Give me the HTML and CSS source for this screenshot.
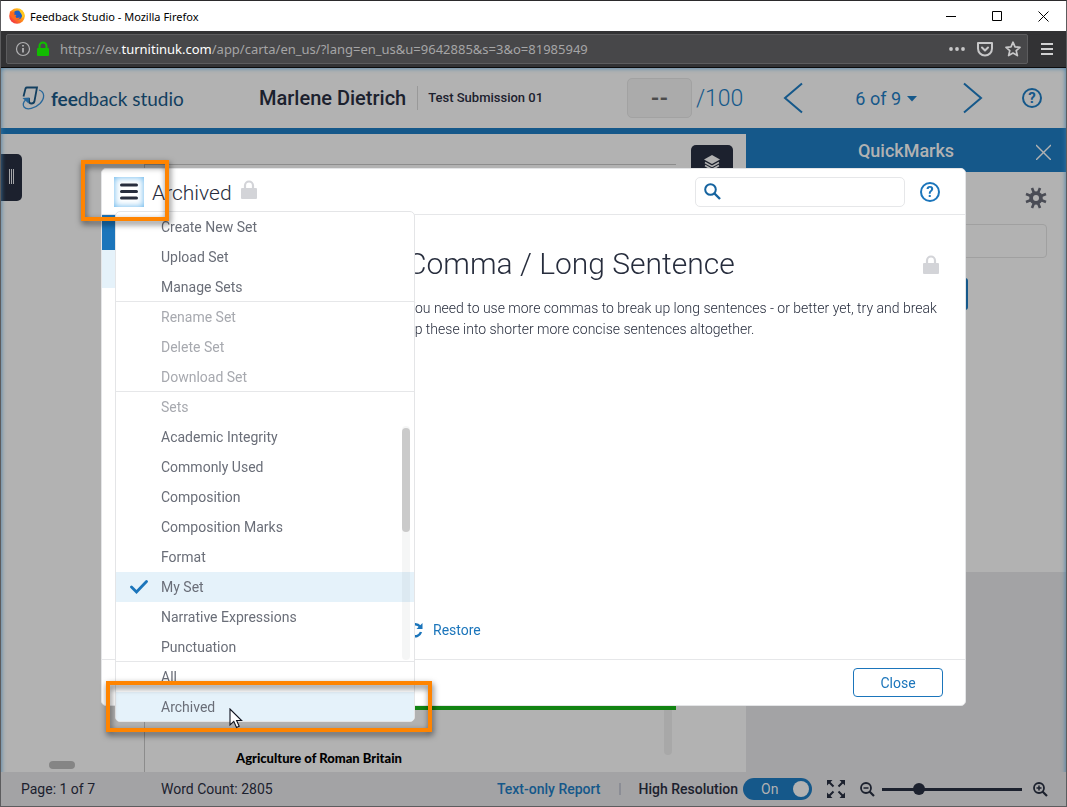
FILE: index.html
```
<!DOCTYPE html>
<html lang="en">
<head>
  <meta charset="UTF-8" />
  <title>Feedback Studio</title>
  <link rel="stylesheet" href="styles.css">
</head>
<body>
  <div class="titlebar">
    <svg class="firefox" viewBox="0 0 16 16" width="16" height="16">
      <defs>
        <linearGradient id="fox" x1="1" y1="0" x2="0" y2="1">
          <stop offset="0" stop-color="#ffe226" />
          <stop offset="0.45" stop-color="#ff9416" />
          <stop offset="1" stop-color="#f0144e" />
        </linearGradient>
      </defs>
      <circle cx="8" cy="8" r="7.8" fill="url(#fox)" />
      <circle cx="8.6" cy="7" r="4.6" fill="#1f5fc4" />
      <path d="M1 3l2 1.200 3 .2-1 2 2.500.600-1 1.500 1 1.500 3.500-.500c-1 2.500-4 3.300-6.500 1.500C1.500 9.500.5 6 1 3z" fill="#ff6a1c" />
      <path d="M10 .8c3 1.200 5.500 4.200 5.500 7.500l-2.500 2c.5-3-.5-4-1.500-5.500C10.500 3.500 9.800 2.300 10 .8z" fill="#ffc91f" />
    </svg>
    <span class="window-title">Feedback Studio - Mozilla Firefox</span>
    <button class="window-btn" aria-label="Minimize"><svg width="11" height="11"><path d="M0 5.500h10" stroke="#000" /></svg></button>
    <button class="window-btn" aria-label="Maximize"><svg width="11" height="11"><path d="M.5.500h9v9h-9z" stroke="#000" fill="none" /></svg></button>
    <button class="window-btn" aria-label="Close window"><svg width="11" height="11"><path d="M.5.500l10 10M10.500.500l-10 10" stroke="#000" /></svg></button>
  </div>

  <div class="toolbar">
    <div class="urlbar">
      <svg width="16" height="16" viewBox="0 0 16 16" fill="none" stroke="#b1b1b3"><circle cx="8" cy="8" r="6.500" stroke-width="1.200" /><path d="M8 7v4.500M8 4v1.500" stroke-width="1.800" /></svg>
      <svg width="14" height="16" viewBox="0 0 14 16"><path d="M3.500 7V5a3.300 3.300 0 0 1 7 0v2" fill="none" stroke="#12bc00" stroke-width="2" /><rect x="1" y="7" width="12" height="8" rx="1" fill="#12bc00" /></svg>
      <span class="url">https://ev.<b>turnitinuk.com</b>/app/carta/en_us/?lang=en_us&amp;u=9642885&amp;s=3&amp;o=81985949</span>
      <button class="bar-btn" aria-label="Page actions"><svg width="16" height="16" fill="#c8c8c9"><circle cx="2" cy="8" r="1.900" /><circle cx="8" cy="8" r="1.900" /><circle cx="14" cy="8" r="1.900" /></svg></button>
      <button class="bar-btn" aria-label="Save to Pocket"><svg width="16" height="16" fill="none" stroke="#c8c8c9" stroke-width="2" stroke-linecap="round" stroke-linejoin="round"><path d="M1 2h14v5.500a7 7 0 0 1-14 0z" /><path d="M5 6.500l3 3 3-3" /></svg></button>
      <button class="bar-btn" aria-label="Bookmark"><svg width="16" height="16" fill="none" stroke="#c8c8c9" stroke-width="1.700" stroke-linejoin="round"><path d="M8 1.200l2 4.600 5 .5-3.800 3.300 1.200 5L8 12l-4.400 2.600 1.200-5L1 6.300l5-.5z" /></svg></button>
    </div>
    <button class="bar-btn" aria-label="Open menu"><svg width="12" height="12"><path d="M0 1h12M0 6h12M0 11h12" stroke="#d0d0d1" stroke-width="2" /></svg></button>
  </div>

  <div class="app">
    <div class="workspace">
      <header class="header">
        <div class="logo">
          <svg width="24" height="26" viewBox="0 0 24 26" fill="none">
            <path d="M2.500 11.500L4.500 3.500Q5 2.500 6 2.500H16L13.500 16q-.5 2.500-3 2.500-2.500 0-2.500-2.500v-3" stroke="#123f60" stroke-width="1.800" />
            <path d="M18 5c6 2 6 8 1 13.500-5 5-13 7-16 3.500-1.500-2.500-.5-5 1.500-7" stroke="#28679a" stroke-width="1.300" />
            <path d="M1.500 13l7-.5-1 6z" fill="#28679a" />
          </svg>
          <span><b>fee</b>dback studio</span>
        </div>
        <h1 class="student">Marlene Dietrich</h1>
        <span class="submission">Test Submission 01</span>
        <div class="grading">
          <button class="score">--</button>
          <span class="total">/100</span>
        </div>
        <button class="plain previous" aria-label="Previous"><svg width="20" height="32" fill="none" stroke="#15588a" stroke-width="2"><path d="M19 1.500L2 16l17 14.500" /></svg></button>
        <button class="plain position">6 of 9 <svg width="10" height="8"><path d="M0 2h10L5 7.500z" fill="#15588a" /></svg></button>
        <button class="plain next" aria-label="Next"><svg width="20" height="32" fill="none" stroke="#15588a" stroke-width="2"><path d="M1 1.500L18 16 1 30.500" /></svg></button>
        <button class="help help-dim" aria-label="Help">?</button>
      </header>

      <main class="main">
        <section class="document">
          <button class="handle" aria-label="Show pages"><svg width="5" height="15"><path d="M.5 0v15M2.500 0v15M4.500 0v15" stroke="#a5a6a9" /></svg></button>
          <button class="layers" aria-label="Layers"><svg width="16" height="16" viewBox="0 0 16 16"><path d="M8 1l8 4.500-8 4.500-8-4.500z" fill="#b2b2b2" /><path d="M1 8.500l7 4 7-4M1 11.500l7 4 7-4" fill="none" stroke="#b2b2b2" stroke-width="1.500" /></svg></button>
          <div class="page">
            <div class="page-text">
              <h2>Agriculture of Roman Britain</h2>
              <span class="page-track"></span>
            </div>
          </div>
          <span class="h-thumb"></span>
        </section>

        <aside class="quickmarks">
          <div class="panel-header">
            <h2>QuickMarks</h2>
            <button class="plain" aria-label="Close QuickMarks"><svg width="15" height="19"><path d="M0 4l15 15M15 4L0 19" stroke="#b2b2b2" stroke-width="1.400" /></svg></button>
          </div>
          <div class="panel-body">
            <button class="plain gear" aria-label="Settings"><svg width="22" height="22" viewBox="-11 -11 22 22"><path d="M-4-10L4 10M4-10L-4 10M-10-4L10 4M-10 4L10-4" stroke="#4a4c55" stroke-width="2.600" /><circle r="6.800" fill="#4a4c55" /><circle r="3" fill="#b2b2b2" /></svg></button>
            <input class="panel-input" type="text" aria-label="QuickMark set">
            <button class="panel-action" aria-label="Add QuickMark"></button>
          </div>
        </aside>
      </main>
    </div>

    <footer class="footer">
      <span class="page-count">Page: 1 of 7</span>
      <span>Word Count: 2805</span>
      <a class="report" href="#">Text-only Report</a>
      <span class="divider"></span>
      <label class="resolution" for="resolution">High Resolution</label>
      <span class="toggle"><input type="checkbox" id="resolution" checked><span class="toggle-text">On</span></span>
      <button class="plain fullscreen" aria-label="Full screen"><svg width="20" height="20" viewBox="0 0 20 20"><path d="M2 2l5.500 5.500M18 2l-5.500 5.500M2 18l5.500-5.500M18 18l-5.500-5.500" stroke="#1c212e" stroke-width="2" /><path d="M1 1h5.500L1 6.500zM19 1v5.500L13.500 1zM1 19v-5.500L6.500 19zM19 19h-5.500l5.500-5.500z" fill="#1c212e" /></svg></button>
      <button class="plain" aria-label="Zoom out"><svg width="15" height="15" fill="none" stroke="#1c212e" stroke-width="1.800"><circle cx="6" cy="6" r="5" /><path d="M3.500 6h5" stroke-width="1.500" /><path d="M9.500 9.500l4.500 4.500" stroke-width="2.200" /></svg></button>
      <input class="zoom" type="range" min="0" max="100" value="24" aria-label="Zoom">
      <button class="plain" aria-label="Zoom in"><svg width="15" height="15" fill="none" stroke="#1c212e" stroke-width="1.800"><circle cx="6" cy="6" r="5" /><path d="M3.500 6h5M6 3.500v5" stroke-width="1.500" /><path d="M9.500 9.500l4.500 4.500" stroke-width="2.200" /></svg></button>
    </footer>
  </div>

  <div class="overlay">
    <div class="modal" role="dialog" aria-label="QuickMark manager">
      <div class="modal-header">
        <button class="hamburger" aria-label="Sets menu"><svg width="18" height="17"><path d="M1.500 2h15M1.500 8.500h15M1.500 15h15" stroke="#272d3d" stroke-width="3" stroke-linecap="round" /></svg></button>
        <h2>Archived</h2>
        <svg class="lock" width="16" height="19" viewBox="0 0 16 19"><path d="M4 9V5.500a4 4 0 0 1 8 0V9" fill="none" stroke="#d3d4d8" stroke-width="2.200" /><rect y="8" width="16" height="11" rx="1" fill="#d3d4d8" /></svg>
        <div class="search">
          <svg width="17" height="17" fill="none" stroke="#15639f"><circle cx="6.500" cy="6.500" r="5.300" stroke-width="2" /><path d="M10.500 10.500l5.500 5.500" stroke-width="2.400" /></svg>
          <input type="text" aria-label="Search QuickMarks">
        </div>
        <button class="help" aria-label="Help with QuickMarks">?</button>
      </div>
      <div class="modal-body">
        <div class="mark-list">
          <div class="mark-set"></div>
          <div class="mark-selected"></div>
        </div>
        <article class="mark">
          <div class="mark-title">
            <h3>Comma / Long Sentence</h3>
            <svg width="16" height="19" viewBox="0 0 16 19"><path d="M4 9V5.500a4 4 0 0 1 8 0V9" fill="none" stroke="#d3d4d8" stroke-width="2.200" /><rect y="8" width="16" height="11" rx="1" fill="#d3d4d8" /></svg>
          </div>
          <p>You need to use more commas to break up long sentences - or better yet, try and break up these into shorter more concise sentences altogether.</p>
          <button class="plain restore"><svg width="16" height="16" viewBox="0 0 16 16"><path d="M13 4.500A6 6 0 1 0 14 10" fill="none" stroke="#1b75bb" stroke-width="2.400" /><path d="M15.500 1v6h-6z" fill="#1b75bb" /></svg>Restore</button>
        </article>
      </div>
      <div class="modal-footer">
        <button class="close">Close</button>
      </div>

      <div class="menu" role="menu">
        <div class="menu-group">
          <button role="menuitem">Create New Set</button>
          <button role="menuitem">Upload Set</button>
          <button role="menuitem">Manage Sets</button>
        </div>
        <div class="menu-group">
          <button role="menuitem" disabled>Rename Set</button>
          <button role="menuitem" disabled>Delete Set</button>
          <button role="menuitem" disabled>Download Set</button>
        </div>
        <div class="menu-group">
          <span class="menu-label">Sets</span>
          <button role="menuitem">Academic Integrity</button>
          <button role="menuitem">Commonly Used</button>
          <button role="menuitem">Composition</button>
          <button role="menuitem">Composition Marks</button>
          <button role="menuitem">Format</button>
          <button class="active" role="menuitem"><svg width="18" height="14"><path d="M1.500 7l5 5L16.500 1.500" fill="none" stroke="#1b75bb" stroke-width="2.800" stroke-linecap="round" /></svg>My Set</button>
          <button role="menuitem">Narrative Expressions</button>
          <button role="menuitem">Punctuation</button>
          <div class="menu-scroll"><div class="menu-thumb"></div></div>
        </div>
        <div class="menu-group">
          <button role="menuitem">All</button>
          <button class="active" role="menuitem">Archived</button>
        </div>
      </div>

      <div class="callout callout-button"></div>
      <div class="callout callout-item"></div>
      <svg class="cursor" width="14" height="21" viewBox="0 0 14 21"><path d="M1 1v16l3.800-3.600L7.500 19.500l2.700-1.200-2.600-5.800h5z" fill="#fff" stroke="#10131f" stroke-width="1.100" /></svg>
    </div>
  </div>
</body>
</html>
```

FILE: styles.css
```
* {
  box-sizing: border-box;
}

body {
  margin: 0;
  height: 100vh;
  display: flex;
  flex-direction: column;
  border: 1px solid #5c5c5e;
  border-top-color: #2b2a2c;
  font-family: Roboto, sans-serif;
  font-size: 14px;
  color: #1c212e;
  overflow: hidden;
}

h1, h2, h3, p {
  margin: 0;
}

button {
  font: inherit;
  cursor: pointer;
}

svg {
  flex: none;
}

.plain, .bar-btn, .window-btn {
  display: flex;
  align-items: center;
  padding: 0;
  border: none;
  background: none;
}

/* Browser window */
.titlebar {
  display: flex;
  align-items: center;
  height: 30px;
  padding-left: 8px;
  background: #fff;
  color: #000;
}

.window-title {
  flex: 1;
  margin-left: 5px;
  font: 11px "Noto Sans", sans-serif;
}

.window-btn {
  width: 46px;
  height: 30px;
  justify-content: center;
}

.toolbar {
  display: flex;
  align-items: center;
  gap: 13px;
  height: 37px;
  padding: 0 13px 0 5px;
  background: #323234;
  border-bottom: 1px solid #0c0c0d;
}

.urlbar {
  flex: 1;
  display: flex;
  align-items: center;
  height: 30px;
  padding: 0 6px 0 8px;
  gap: 12px;
  background: #474749;
  border: 1px solid #5c5c5e;
  border-radius: 2px;
}

.urlbar svg + svg {
  margin: 0 -2px 0 -7px;
}

.url {
  flex: 1;
  font: 13px "Noto Sans", sans-serif;
  color: #a5a5a6;
}

.url b {
  font-weight: 400;
  color: #fff;
}

/* Header */
.app {
  flex: 1;
  display: flex;
  flex-direction: column;
  min-height: 0;
  background: #b2b2b2;
}

.workspace {
  position: relative;
  flex: 1;
  display: flex;
  flex-direction: column;
  min-height: 0;
}

.workspace::after {
  content: "";
  position: absolute;
  inset: 0 0 -10px;
  box-shadow: inset 0 0 5px #3c7aa6;
  clip-path: inset(0 0 10px);
  pointer-events: none;
}

.header {
  display: flex;
  align-items: center;
  height: 60px;
  padding: 0 24px 0 20px;
  color: #15588a;
}

.logo {
  display: flex;
  align-items: center;
  gap: 6px;
  width: 238px;
  color: #123f60;
  font: 19px Lato, sans-serif;
}

.student {
  padding-right: 11px;
  border-right: 1px solid #999;
  font-size: 20px;
  font-weight: 500;
  color: #1c212e;
}

.submission {
  margin-left: 10px;
  font-size: 13px;
  font-weight: 500;
  line-height: 20px;
  color: #1c212e;
}

.grading {
  display: flex;
  align-items: center;
  gap: 4px;
  margin-left: auto;
}

.score {
  width: 65px;
  height: 40px;
  background: #ababab;
  border: 1px solid #a2a2a2;
  border-radius: 5px;
  color: #4b4b4b;
  font-size: 22px;
  font-weight: 700;
}

.total {
  font-size: 23px;
  font-weight: 300;
}

.previous {
  margin-left: 40px;
}

.position {
  gap: 6px;
  margin: 0 46px 0 52px;
  color: #15588a;
  font-size: 18px;
}

.help {
  width: 20px;
  height: 20px;
  padding: 0;
  background: none;
  border: 2px solid #1b75bb;
  border-radius: 50%;
  color: #1b75bb;
  font-size: 15px;
  font-weight: 700;
  line-height: 16px;
}

.help-dim {
  margin-left: 39px;
  border-color: #15588a;
  color: #15588a;
}

/* Document and side panel */
.main {
  flex: 1;
  display: flex;
  min-height: 0;
  border-top: 6px solid #15588a;
}

.document {
  position: relative;
  flex: 1;
  display: flex;
  padding: 30px 70px 0 143px;
}

.page {
  flex: 1;
  display: flex;
  flex-direction: column;
  justify-content: flex-end;
  border-top: 1px solid #8c8c8c;
  border-left: 1px solid #8c8c8c;
}

.page-text {
  position: relative;
  height: 66px;
  padding: 40px 91px 0;
  border-top: 4px solid #128312;
}

.page-text h2 {
  color: #000;
  font: 900 13px/16px Lato, sans-serif;
}

.page-track {
  position: absolute;
  top: 0;
  right: 4px;
  width: 8px;
  height: 45px;
  background: #a8a8a8;
  border-radius: 0 0 4px 4px;
}

.h-thumb {
  position: absolute;
  left: 48px;
  bottom: 3px;
  width: 26px;
  height: 8px;
  background: #858585;
  border-radius: 4px;
}

.handle {
  position: absolute;
  left: 0;
  top: 20px;
  width: 21px;
  height: 47px;
  padding: 0;
  background: #1c212e;
  border: none;
  border-radius: 0 5px 5px 0;
}

.layers {
  position: absolute;
  right: 13px;
  top: 11px;
  width: 42px;
  height: 36px;
  padding: 0;
  background: #1c212e;
  border: none;
  border-radius: 5px;
}

.quickmarks {
  width: 320px;
  display: flex;
  flex-direction: column;
  margin-top: -6px;
  background: #a3a3a5;
}

.panel-header {
  display: flex;
  align-items: center;
  height: 44px;
  padding: 0 15px;
  background: #15588a;
  color: #b2b2b2;
}

.panel-header h2 {
  flex: 1;
  padding-left: 15px;
  text-align: center;
  font-size: 18px;
  font-weight: 500;
}

.panel-body {
  height: 400px;
  display: flex;
  flex-direction: column;
  align-items: flex-end;
  padding: 15px 19px;
  background: #b2b2b2;
}

.panel-input {
  width: 100%;
  height: 34px;
  margin-top: 15px;
  background: none;
  border: 1px solid #a0a0a0;
  border-radius: 4px;
}

.panel-action {
  width: 200px;
  height: 32px;
  margin: 20px 79px 0 0;
  background: #15588a;
  border: none;
  border-radius: 3px;
}

/* Footer */
.footer {
  display: flex;
  align-items: center;
  height: 34px;
  padding: 0 18px 0 20px;
  background: #a3a3a5;
}

.page-count {
  width: 140px;
}

.report {
  margin-left: auto;
  color: #15588a;
  font-weight: 500;
  text-decoration: none;
}

.divider {
  width: 2px;
  height: 12px;
  margin: 0 18px;
  background: #8b8d95;
}

.resolution {
  font-weight: 500;
}

.toggle {
  position: relative;
  display: flex;
  margin-left: 5px;
}

.toggle input {
  appearance: none;
  display: flex;
  align-items: center;
  justify-content: flex-end;
  width: 69px;
  height: 22px;
  margin: 0;
  padding: 3px;
  background: #15588a;
  border-radius: 11px;
}

.toggle input::after {
  content: "";
  width: 16px;
  height: 16px;
  background: #b2b2b2;
  border-radius: 50%;
}

.toggle-text {
  position: absolute;
  left: 18px;
  top: 3px;
  color: #b2b2b2;
  pointer-events: none;
}

.fullscreen {
  margin: 0 14px;
}

.zoom {
  appearance: none;
  width: 140px;
  height: 12px;
  margin: 0 11px 0 7px;
  background: linear-gradient(#1c212e, #1c212e) center / 100% 3px no-repeat;
}

.zoom::-webkit-slider-thumb {
  appearance: none;
  width: 12px;
  height: 12px;
  background: #1c212e;
  border-radius: 50%;
}

/* Modal */
.overlay {
  position: fixed;
  inset: 0;
  display: flex;
  padding: 168px 101px 101px;
}

.modal {
  position: relative;
  flex: 1;
  display: flex;
  flex-direction: column;
  background: #fff;
  border: 1px solid #e4e5e7;
  border-radius: 5px;
  color: #272d3d;
}

.modal-header {
  display: flex;
  align-items: center;
  height: 46px;
  padding: 0 25px 0 12px;
  border-bottom: 1px solid #e6e7e9;
}

.hamburger {
  display: flex;
  align-items: center;
  justify-content: center;
  width: 30px;
  height: 30px;
  padding: 0;
  background: #fff;
  border: none;
  box-shadow: inset 0 0 7px #5cb0ea;
}

.modal-header h2 {
  margin: 2px 9px 0 8px;
  font-size: 21px;
  font-weight: 300;
}

.lock {
  margin-bottom: 4px;
}

.search {
  display: flex;
  align-items: center;
  width: 210px;
  height: 30px;
  margin: 0 15px 0 auto;
  padding: 0 8px;
  border: 1px solid #e6e7e9;
  border-radius: 5px;
}

.search input {
  flex: 1;
  min-width: 0;
  border: none;
  outline: none;
  font: inherit;
}

.modal-body {
  flex: 1;
  display: flex;
}

.mark-list {
  width: 281px;
}

.mark-set {
  height: 35px;
  background: #1b75bb;
}

.mark-selected {
  height: 38px;
  background: #e5f2fa;
}

.mark {
  flex: 1;
  display: flex;
  flex-direction: column;
  padding: 27px 26px 21px 24px;
}

.mark-title {
  display: flex;
  align-items: center;
  justify-content: space-between;
  margin-bottom: 12px;
}

.mark h3 {
  font-size: 30px;
  font-weight: 300;
  line-height: 44px;
}

.mark p {
  font-weight: 300;
  line-height: 21px;
}

.restore {
  gap: 10px;
  margin-top: auto;
  color: #1b75bb;
}

.modal-footer {
  display: flex;
  align-items: center;
  justify-content: flex-end;
  height: 46px;
  padding: 0 22px;
  border-top: 1px solid #e6e7e9;
}

.close {
  width: 90px;
  height: 29px;
  padding: 0;
  background: #fff;
  border: 1px solid #1b75bb;
  border-radius: 4px;
  color: #1b75bb;
}

/* Sets menu */
.menu {
  position: absolute;
  left: 13px;
  top: 42px;
  width: 300px;
  background: #fff;
  border: 1px solid #e4e5e7;
  border-radius: 5px;
  overflow: hidden;
}

.menu-group {
  position: relative;
  display: flex;
  flex-direction: column;
}

.menu-group + .menu-group::before {
  content: "";
  position: absolute;
  top: -1px;
  width: 100%;
  height: 1px;
  background: #e6e7e9;
}

.menu button, .menu-label {
  display: flex;
  align-items: center;
  height: 30px;
  padding: 0 0 0 45px;
  background: none;
  border: none;
  color: #6a6e78;
}

.menu button:disabled, .menu-label {
  color: #a7a9af;
}

.menu .active {
  background: #e5f2fa;
}

.menu .active:last-child {
  height: 29px;
}

.menu .active svg {
  margin: 0 13px 0 -31px;
}

.menu-scroll {
  position: absolute;
  right: 4px;
  top: 34px;
  bottom: 2px;
  width: 8px;
  background: rgba(0, 30, 20, 0.04);
  border-radius: 4px;
}

.menu-thumb {
  height: 104px;
  margin-top: 2px;
  background: #cacaca;
  border-radius: 4px;
}

/* Tutorial callouts */
.callout {
  position: absolute;
  border: 4px solid #ff8400;
  filter: drop-shadow(1px 3px 3px rgba(0, 0, 0, 0.6));
  pointer-events: none;
}

.callout-button {
  left: -21px;
  top: -9px;
  width: 88px;
  height: 61px;
}

.callout-item {
  left: 4px;
  bottom: -27px;
  width: 326px;
  height: 51px;
}

.cursor {
  position: absolute;
  left: 127px;
  bottom: -24px;
}
```
